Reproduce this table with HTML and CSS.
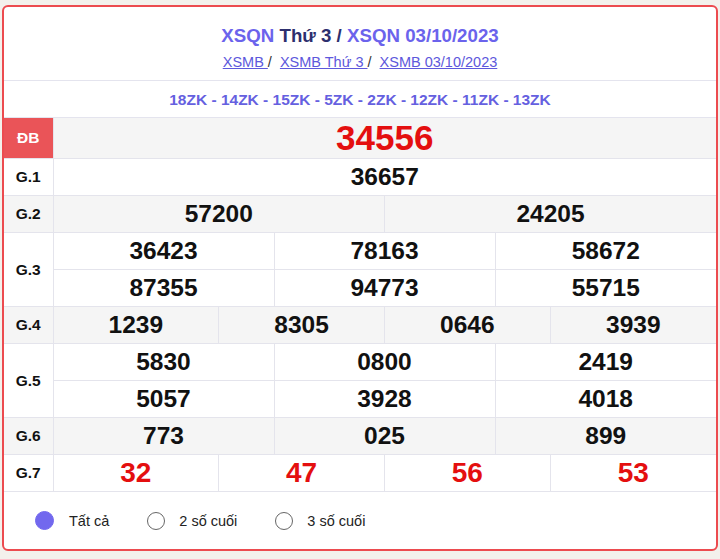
FILE: index.html
```html
<!DOCTYPE html>
<html lang="vi">
<head>
<meta charset="utf-8">
<title>XSQN 03/10/2023</title>
<link rel="stylesheet" href="styles.css">
</head>
<body>
<div class="box">
  <div class="head">
    <h2 class="title"><a href="#">XSQN</a> Thứ 3 / <a href="#">XSQN 03/10/2023</a></h2>
    <div class="crumbs"><a href="#">XSMB </a> / <a href="#">XSMB Thứ 3 </a> / <a href="#">XSMB 03/10/2023</a></div>
  </div>
  <div class="codes">18ZK - 14ZK - 15ZK - 5ZK - 2ZK - 12ZK - 11ZK - 13ZK</div>
  <table class="kq">
    <colgroup><col class="c-lbl"><col span="12"></colgroup>
    <tr class="db grey">
      <th class="lbl-db">ĐB</th>
      <td colspan="12" class="num big">34556</td>
    </tr>
    <tr>
      <th>G.1</th>
      <td colspan="12" class="num">36657</td>
    </tr>
    <tr class="grey">
      <th>G.2</th>
      <td colspan="6" class="num">57200</td>
      <td colspan="6" class="num">24205</td>
    </tr>
    <tr>
      <th rowspan="2">G.3</th>
      <td colspan="4" class="num">36423</td>
      <td colspan="4" class="num">78163</td>
      <td colspan="4" class="num">58672</td>
    </tr>
    <tr>
      <td colspan="4" class="num">87355</td>
      <td colspan="4" class="num">94773</td>
      <td colspan="4" class="num">55715</td>
    </tr>
    <tr class="grey">
      <th>G.4</th>
      <td colspan="3" class="num">1239</td>
      <td colspan="3" class="num">8305</td>
      <td colspan="3" class="num">0646</td>
      <td colspan="3" class="num">3939</td>
    </tr>
    <tr>
      <th rowspan="2">G.5</th>
      <td colspan="4" class="num">5830</td>
      <td colspan="4" class="num">0800</td>
      <td colspan="4" class="num">2419</td>
    </tr>
    <tr>
      <td colspan="4" class="num">5057</td>
      <td colspan="4" class="num">3928</td>
      <td colspan="4" class="num">4018</td>
    </tr>
    <tr class="grey">
      <th>G.6</th>
      <td colspan="4" class="num">773</td>
      <td colspan="4" class="num">025</td>
      <td colspan="4" class="num">899</td>
    </tr>
    <tr>
      <th>G.7</th>
      <td colspan="3" class="num red">32</td>
      <td colspan="3" class="num red">47</td>
      <td colspan="3" class="num red">56</td>
      <td colspan="3" class="num red">53</td>
    </tr>
  </table>
  <div class="opts">
    <label class="opt"><span class="radio on"></span>Tất cả</label>
    <label class="opt"><span class="radio"></span>2 số cuối</label>
    <label class="opt"><span class="radio"></span>3 số cuối</label>
  </div>
</div>
</body>
</html>
```

FILE: styles.css
```css
html, body {
  margin: 0;
  padding: 0;
}
body {
  background: #f3f1ec;
  font-family: "Liberation Sans", Arial, sans-serif;
  color: #111;
  padding: 5px 2px 4px 2px;
}
.box {
  background: #fff;
  border: 2px solid #ec4b4f;
  border-radius: 6px;
  height: 546px;
  box-sizing: border-box;
  overflow: hidden;
}
.head {
  text-align: center;
  padding: 18px 0 9px;
  border-bottom: 1px solid #e4e4ee;
}
.title {
  margin: 0;
  font-size: 18.7px;
  line-height: 21px;
  font-weight: bold;
  color: #2d2f6e;
}
.title a {
  color: #6b63ec;
  text-decoration: none;
}
.crumbs {
  margin-top: 7px;
  font-size: 14.5px;
  line-height: 18px;
  color: #333;
  word-spacing: 4px;
}
.crumbs a {
  color: #5d58dc;
  text-decoration: underline;
  word-spacing: 0;
}
.codes {
  text-align: center;
  font-size: 15.5px;
  font-weight: bold;
  color: #6560e0;
  height: 36px;
  line-height: 37px;
  border-bottom: 1px solid #e4e4ee;
}
.kq {
  width: 100%;
  border-collapse: collapse;
  table-layout: fixed;
}
.c-lbl {
  width: 49px;
}
.kq th, .kq td {
  border: 1px solid #e4e4ec;
  padding: 0;
  height: 36px;
  text-align: center;
  vertical-align: middle;
}
.kq tr:first-child th, .kq tr:first-child td {
  border-top: none;
}
.kq th:first-child {
  border-left: none;
}
.kq td:last-child {
  border-right: none;
}
.kq td + td {
  border-left: 1px solid #d6d6d6;
}
.kq th {
  font-size: 15.5px;
  font-weight: bold;
  color: #111;
}
.grey th, .grey td {
  background: #f5f5f5;
}
.kq .db th, .kq .db td {
  height: 40px;
}
.kq .lbl-db {
  background: #ea5458;
  color: #fff;
}
.num {
  font-size: 24.5px;
  font-weight: bold;
  color: #111;
}
.num.big {
  font-size: 35px;
  color: #e40f0f;
}
.num.red {
  font-size: 28px;
  color: #e40f0f;
}
.opts {
  display: flex;
  align-items: center;
  padding: 19px 0 0 31px;
}
.opt {
  display: flex;
  align-items: center;
  font-size: 14.5px;
  color: #222;
  margin-right: 38px;
}
.radio {
  width: 18px;
  height: 18px;
  border: 1px solid #666;
  border-radius: 50%;
  box-sizing: border-box;
  margin-right: 14px;
}
.radio.on {
  background: #7268ee;
  border-color: #7268ee;
  width: 19px;
  height: 19px;
  margin-right: 15px;
}
```
